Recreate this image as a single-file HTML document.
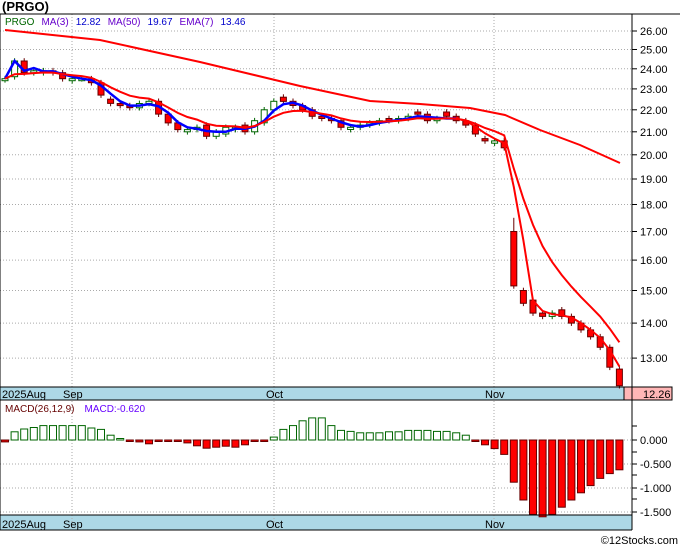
<!DOCTYPE html>
<html><head><meta charset="utf-8"><style>
body{margin:0;background:#fff;width:680px;height:546px;overflow:hidden;font-family:"Liberation Sans",sans-serif}
svg{display:block}
</style></head><body>
<svg id="s" width="680" height="546" xmlns="http://www.w3.org/2000/svg" font-family="Liberation Sans, sans-serif"></svg>
<script>
var s=document.getElementById('s');var h='';
function Y(p){return 1568.2-471.8*Math.log(p);}
function M(v){return 440-48*v;}
function X(i){return 5+i*9.6;}
h+='<rect x="0" y="387" width="632" height="13" fill="#add8e6"/>';
h+='<rect x="0" y="515" width="632" height="15" fill="#add8e6"/>';
h+='<rect x="624" y="387" width="48" height="13" fill="#ffb6b6" stroke="#000" stroke-width="1"/>';
var prices=[26,25,24,23,22,21,20,19,18,17,16,15,14,13];
prices.forEach(function(p){var y=Y(p).toFixed(1);h+='<line x1="0" y1="'+y+'" x2="632" y2="'+y+'" stroke="#aaa" stroke-dasharray="1,2"/>';
h+='<line x1="632" y1="'+y+'" x2="637" y2="'+y+'" stroke="#000"/>';
h+='<text x="640" y="'+(+y+4)+'" font-size="11" fill="#000">'+p.toFixed(2)+'</text>';});
[0,-0.5,-1,-1.5].forEach(function(v){var y=M(v).toFixed(1);h+='<line x1="0" y1="'+y+'" x2="632" y2="'+y+'" stroke="#aaa" stroke-dasharray="1,2"/>';
h+='<line x1="632" y1="'+y+'" x2="637" y2="'+y+'" stroke="#000"/>';
h+='<text x="640" y="'+(+y+4)+'" font-size="11" fill="#000">'+(v==0?'0.000':v.toFixed(3))+'</text>';});
[426,452,475,499].forEach(function(y){h+='<line x1="632" y1="'+y+'" x2="637" y2="'+y+'" stroke="#000"/>';});
[72,274,494].forEach(function(x){h+='<line x1="'+x+'" y1="14" x2="'+x+'" y2="530" stroke="#aaa" stroke-dasharray="1,2"/>';});
var c=[23.5,24.4,23.8,23.9,23.9,23.8,23.5,23.5,23.5,23.3,22.7,22.3,22.2,22.1,22.3,22.4,21.8,21.4,21.1,21.1,21.2,20.8,21.0,21.2,21.2,21.0,21.5,22.0,22.4,22.4,22.2,22.0,21.7,21.6,21.5,21.2,21.2,21.3,21.4,21.5,21.5,21.6,21.7,21.8,21.5,21.6,21.7,21.5,21.3,20.9,20.6,20.6,20.3,15.15,14.6,14.3,14.2,14.3,14.2,14.0,13.8,13.6,13.3,12.75,12.26];
var o=[23.45,23.6,24.4,23.8,23.8,23.9,23.8,23.4,23.5,23.5,23.3,22.5,22.3,22.2,22.1,22.3,22.4,21.8,21.4,21.0,21.1,21.3,20.8,20.9,21.1,21.3,21.0,21.4,22.0,22.6,22.4,22.2,22.0,21.7,21.6,21.5,21.1,21.2,21.3,21.4,21.6,21.5,21.6,21.9,21.8,21.5,21.9,21.7,21.5,21.3,20.7,20.5,20.6,17.0,15.0,14.7,14.3,14.2,14.4,14.2,14.0,13.8,13.6,13.3,12.7];
var body='';
for(var i=0;i<c.length;i++){var x=X(i),up=c[i]>=o[i];var hi=Math.max(o[i],c[i])*1.006,lo=Math.min(o[i],c[i])*0.994;if(i==53)hi=17.5;
var col=up?'#060':'#600';
body+='<line x1="'+x.toFixed(1)+'" y1="'+Y(hi).toFixed(1)+'" x2="'+x.toFixed(1)+'" y2="'+Y(lo).toFixed(1)+'" stroke="'+col+'"/>';
var y1=Y(Math.max(o[i],c[i])),y2=Y(Math.min(o[i],c[i]));if(y2-y1<2)y2=y1+2;
body+='<rect x="'+(x-3).toFixed(1)+'" y="'+y1.toFixed(1)+'" width="6" height="'+(y2-y1).toFixed(1)+'" fill="'+(up?'#fff':'#f00')+'" stroke="'+col+'"/>';}
var ma='',ma2='',em='',e=c[0];
for(var i=0;i<c.length;i++){var a=i<2?c[i]:(c[i]+c[i-1]+c[i-2])/3;var pt=X(i).toFixed(1)+' '+Y(a).toFixed(1);
if(i<=47)ma+=(i?'L':'M')+pt; if(i>=47)ma2+=(i==47?'M':'L')+pt;
e=i?e+(c[i]-e)*0.25:c[0];em+=(i?'L':'M')+X(i).toFixed(1)+' '+Y(e).toFixed(1);}
h+='<path d="M5 30 L100 40 L200 62 L300 86 L370 101 L420 104 L470 108 L505 115 L540 130 L580 145 L620 163" fill="none" stroke="#f00" stroke-width="2"/>';
h+=body;
h+='<path d="'+ma+'" fill="none" stroke="#00f" stroke-width="2.5"/>';
h+='<path d="'+ma2+'" fill="none" stroke="#f00" stroke-width="2"/>';
h+='<path d="'+em+'" fill="none" stroke="#f00" stroke-width="2"/>';
var m=[-0.04,0.17,0.23,0.26,0.3,0.3,0.3,0.3,0.3,0.25,0.22,0.1,0.02,-0.02,-0.04,-0.08,-0.02,-0.02,-0.02,-0.06,-0.12,-0.17,-0.15,-0.13,-0.15,-0.1,-0.02,-0.02,0.06,0.22,0.3,0.4,0.46,0.46,0.3,0.2,0.18,0.15,0.15,0.15,0.17,0.17,0.2,0.2,0.2,0.18,0.18,0.15,0.1,-0.03,-0.1,-0.18,-0.3,-0.88,-1.25,-1.55,-1.6,-1.55,-1.4,-1.25,-1.1,-0.95,-0.8,-0.7,-0.62];
m.forEach(function(v,i){var x=X(i);var hh=Math.max(Math.abs(48*v),1.5);
if(v>=0)h+='<rect x="'+(x-3.5).toFixed(1)+'" y="'+(440-hh).toFixed(1)+'" width="7" height="'+hh.toFixed(1)+'" fill="#fff" stroke="#060"/>';
else h+='<rect x="'+(x-3.5).toFixed(1)+'" y="440" width="7" height="'+hh.toFixed(1)+'" fill="#f00" stroke="#600"/>';});
h+='<line x1="0" y1="14" x2="680" y2="14" stroke="#000"/>';
h+='<line x1="0" y1="14" x2="0" y2="530" stroke="#000"/>';
h+='<line x1="632" y1="14" x2="632" y2="530" stroke="#000"/>';
h+='<line x1="0" y1="387" x2="632" y2="387" stroke="#000"/><line x1="0" y1="400" x2="632" y2="400" stroke="#000"/>';
h+='<line x1="0" y1="515" x2="632" y2="515" stroke="#000"/><line x1="0" y1="530" x2="632" y2="530" stroke="#000"/>';
h+='<text x="2" y="11" font-size="13" font-weight="bold" fill="#000">(PRGO)</text>';
h+='<text x="5" y="25" font-size="10"><tspan fill="#060">PRGO</tspan><tspan fill="#60c" dx="7">MA(3)</tspan><tspan fill="#00c" dx="7">12.82</tspan><tspan fill="#60c" dx="7">MA(50)</tspan><tspan fill="#00c" dx="7">19.67</tspan><tspan fill="#60c" dx="7">EMA(7)</tspan><tspan fill="#00c" dx="7">13.46</tspan></text>';
h+='<text x="5" y="412" font-size="10"><tspan fill="#600">MACD(26,12,9)</tspan><tspan fill="#60f" dx="10">MACD:-0.620</tspan></text>';
['398','528'].forEach(function(y){h+='<text x="2" y="'+y+'" font-size="11" fill="#000">2025Aug</text><text x="63" y="'+y+'" font-size="11" fill="#000">Sep</text><text x="266" y="'+y+'" font-size="11" fill="#000">Oct</text><text x="485" y="'+y+'" font-size="11" fill="#000">Nov</text>';});
h+='<text x="643" y="398" font-size="11" fill="#000">12.26</text>';
h+='<text x="678" y="544" font-size="11" fill="#000" text-anchor="end">©12Stocks.com</text>';
s.innerHTML=h;
</script>
</body></html>
